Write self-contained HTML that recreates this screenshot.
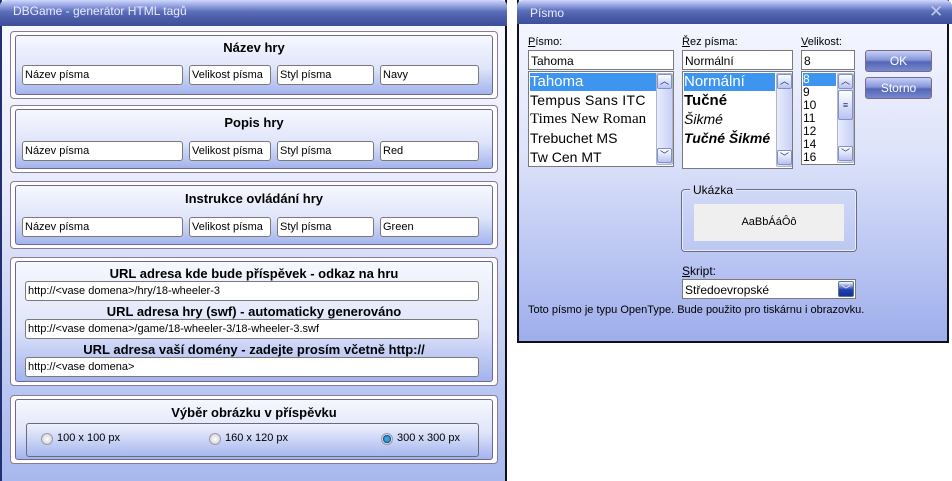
<!DOCTYPE html>
<html><head><meta charset="utf-8"><style>
*{box-sizing:border-box;margin:0;padding:0}
body{width:952px;height:481px;background:#fff;position:relative;overflow:hidden;font-family:"Liberation Sans",sans-serif;font-size:11px;color:#000}
.a{position:absolute}
.tb{background:linear-gradient(#d0d8fc 0%,#9aa8e4 20%,#5c6eba 45%,#4a5ca8 70%,#3e4e9c 100%);color:#e8ecff;font-size:12px;padding-left:13px;padding-top:4px}
.grp{position:absolute;border:1px solid #8a7a98;border-radius:4px;background:#fff}
.grp .in{position:absolute;left:4px;top:3px;right:4px;bottom:3px;border:1px solid #706890;border-radius:3px;background:linear-gradient(#f6f8fe 0%,#dfe5fa 55%,#a3b3ee 100%)}
.h{position:absolute;left:0;right:0;text-align:center;font-weight:bold;font-size:13px}
.inp{position:absolute;background:#fff;border:1px solid #7a7a7a;border-radius:3px;height:20px;padding:3px 2px;font-size:11px;white-space:nowrap;overflow:hidden}
.lb{position:absolute;background:#fff;border:1px solid #7a7a7a;overflow:hidden}
.it{position:absolute;left:1px;white-space:nowrap}
.sb{position:absolute;width:17px;background:linear-gradient(90deg,#e8ecfc,#c8d0f4);border:1px solid #b0b4cc;border-radius:2px}
.ar{position:absolute;width:15px;height:15px;border:1px solid #8090c8;border-radius:2px;background:linear-gradient(#fff,#b8c4f0);color:#203080;font-size:9px;text-align:center;line-height:13px}
.btn{position:absolute;border:1px solid #7a6a8a;border-radius:3px;background:linear-gradient(#c8d0f8 0%,#8494d8 45%,#5466b4 55%,#7888d0 100%);color:#fff;text-align:center;font-size:12px;line-height:19px}
.rad{position:absolute;width:12px;height:12px;border-radius:50%;border:1px solid #9a9aa8;background:radial-gradient(#fff,#c8c8d0)}
</style></head><body>
<div class="a" style="left:0;top:0;width:507px;height:481px;background:linear-gradient(#fafbff 0%,#e6eafb 40%,#c0cbf3 75%,#a8b8ee 100%);border-left:2px solid #203070;border-right:2px solid #101018"></div>
<div class="a tb" style="left:0;top:0;width:507px;height:26px;border-radius:6px 6px 0 0">DBGame - generátor HTML tagů</div>

<div class="grp" style="left:10px;top:31px;width:488px;height:68px"><div class="in"><div class="h" style="top:4px">Název hry</div></div></div>
<div class="inp" style="left:22px;top:65px;width:161px">Název písma</div>
<div class="inp" style="left:189px;top:65px;width:82px">Velikost písma</div>
<div class="inp" style="left:277px;top:65px;width:97px">Styl písma</div>
<div class="inp" style="left:380px;top:65px;width:99px">Navy</div>

<div class="grp" style="left:10px;top:105px;width:488px;height:68px"><div class="in"><div class="h" style="top:5px">Popis hry</div></div></div>
<div class="inp" style="left:22px;top:141px;width:161px">Název písma</div>
<div class="inp" style="left:189px;top:141px;width:82px">Velikost písma</div>
<div class="inp" style="left:277px;top:141px;width:97px">Styl písma</div>
<div class="inp" style="left:380px;top:141px;width:99px">Red</div>

<div class="grp" style="left:10px;top:181px;width:488px;height:68px"><div class="in"><div class="h" style="top:5px">Instrukce ovládání hry</div></div></div>
<div class="inp" style="left:22px;top:217px;width:161px">Název písma</div>
<div class="inp" style="left:189px;top:217px;width:82px">Velikost písma</div>
<div class="inp" style="left:277px;top:217px;width:97px">Styl písma</div>
<div class="inp" style="left:380px;top:217px;width:99px">Green</div>

<div class="grp" style="left:10px;top:257px;width:488px;height:129px"><div class="in">
<div class="h" style="top:4px">URL adresa kde bude příspěvek - odkaz na hru</div>
<div class="h" style="top:42px">URL adresa hry (swf) - automaticky generováno</div>
<div class="h" style="top:80px">URL adresa vaší domény - zadejte prosím včetně http://</div>
</div></div>
<div class="inp" style="left:25px;top:281px;width:454px">http://&lt;vase domena&gt;/hry/18-wheeler-3</div>
<div class="inp" style="left:25px;top:319px;width:454px">http://&lt;vase domena&gt;/game/18-wheeler-3/18-wheeler-3.swf</div>
<div class="inp" style="left:25px;top:357px;width:454px">http://&lt;vase domena&gt;</div>

<div class="grp" style="left:10px;top:395px;width:488px;height:69px"><div class="in"><div class="h" style="top:5px">Výběr obrázku v příspěvku</div></div></div>
<div class="a" style="left:26px;top:423px;width:453px;height:34px;border:1px solid #6a6a7a;border-radius:3px;background:linear-gradient(#eef1fd,#a8b8ee)"></div>
<div class="rad" style="left:41px;top:433px"></div><div class="a" style="left:57px;top:432px">100 x 100 px</div>
<div class="rad" style="left:209px;top:433px"></div><div class="a" style="left:225px;top:432px">160 x 120 px</div>
<div class="rad" style="left:381px;top:433px;background:radial-gradient(#3aa0e0 30%,#104a80 55%,#d8d8e0 60%)"></div><div class="a" style="left:397px;top:432px">300 x 300 px</div>

<div class="a" style="left:517px;top:0;width:432px;height:343px;background:linear-gradient(#f8f9ff 0%,#dde3fa 45%,#9eaeec 100%);border:2px solid #101018;border-top:none"></div>
<div class="a tb" style="left:517px;top:0;width:435px;height:24px;border-radius:6px 6px 0 0;padding-top:6px">Písmo</div>
<div class="a" style="left:929px;top:2px;color:#c0c8e8;font-size:17px">✕</div>

<div class="a" style="left:528px;top:36px"><u>P</u>ísmo:</div>
<div class="inp" style="left:528px;top:50px;width:146px;border-radius:0;font-size:12px">Tahoma</div>
<div class="lb" style="left:528px;top:71px;width:146px;height:96px">
<div class="it" style="top:1px;width:126px;background:#3d95f0;color:#fff;font-size:15px;height:18px">Tahoma</div>
<div class="it" style="top:20px;font-size:14px;letter-spacing:0.3px">Tempus Sans ITC</div>
<div class="it" style="top:39px;font-family:'Liberation Serif',serif;font-size:15px">Times New Roman</div>
<div class="it" style="top:58px;font-size:14px">Trebuchet MS</div>
<div class="it" style="top:77px;font-size:14px">Tw Cen MT</div>
<div class="sb" style="left:127px;top:1px;height:92px"></div>
<div class="ar" style="left:128px;top:2px">︿</div>
<div class="ar" style="left:128px;top:76px">﹀</div>
</div>

<div class="a" style="left:682px;top:36px"><u>Ř</u>ez písma:</div>
<div class="inp" style="left:682px;top:50px;width:111px;border-radius:0;font-size:12px">Normální</div>
<div class="lb" style="left:682px;top:71px;width:111px;height:98px">
<div class="it" style="top:1px;width:91px;background:#3d95f0;color:#fff;font-size:15px;height:18px">Normální</div>
<div class="it" style="top:20px;font-size:15px;font-weight:bold">Tučné</div>
<div class="it" style="top:39px;font-size:14px;font-style:italic">Šikmé</div>
<div class="it" style="top:58px;font-size:14px;font-weight:bold;font-style:italic">Tučné Šikmé</div>
<div class="sb" style="left:93px;top:1px;height:94px"></div>
<div class="ar" style="left:94px;top:2px">︿</div>
<div class="ar" style="left:94px;top:78px">﹀</div>
</div>

<div class="a" style="left:801px;top:36px"><u>V</u>elikost:</div>
<div class="inp" style="left:801px;top:50px;width:54px;border-radius:0;font-size:12px">8</div>
<div class="lb" style="left:801px;top:71px;width:54px;height:94px;font-size:12px">
<div class="it" style="top:1px;width:33px;background:#3d95f0;color:#fff;height:13px;line-height:13px">8</div>
<div class="it" style="top:14px;line-height:13px">9</div>
<div class="it" style="top:27px;line-height:13px">10</div>
<div class="it" style="top:40px;line-height:13px">11</div>
<div class="it" style="top:53px;line-height:13px">12</div>
<div class="it" style="top:66px;line-height:13px">14</div>
<div class="it" style="top:79px;line-height:13px">16</div>
<div class="sb" style="left:35px;top:1px;height:90px"></div>
<div class="ar" style="left:36px;top:2px">︿</div>
<div class="ar" style="left:36px;top:18px;height:30px;line-height:28px">≡</div>
<div class="ar" style="left:36px;top:74px">﹀</div>
</div>

<div class="btn" style="left:865px;top:50px;width:67px;height:22px;line-height:20px">OK</div>
<div class="btn" style="left:865px;top:77px;width:67px;height:22px;line-height:20px">Storno</div>

<div class="a" style="left:682px;top:190px;width:174px;height:61px;border:1px solid #e8ecff;box-shadow:0 0 0 1px #6a6a80;border-radius:3px"></div>
<div class="a" style="left:690px;top:183px;padding:0 3px;background:#d2d9f7;font-size:12px">Ukázka</div>
<div class="a" style="left:694px;top:204px;width:150px;height:37px;background:#efefef;text-align:center;line-height:37px">AaBbÁáÔô</div>

<div class="a" style="left:682px;top:264px;font-size:12px"><u>S</u>kript:</div>
<div class="inp" style="left:682px;top:279px;width:174px;border-radius:0;height:20px;font-size:12px">Středoevropské</div>
<div class="a" style="left:838px;top:281px;width:16px;height:16px;border-radius:2px;background:linear-gradient(#fff,#2040b0 55%,#1030a0);color:#fff;font-size:9px;text-align:center;line-height:16px;border:1px solid #607090">﹀</div>

<div class="a" style="left:528px;top:304px">Toto písmo je typu OpenType. Bude použito pro tiskárnu i obrazovku.</div>
</body></html>
